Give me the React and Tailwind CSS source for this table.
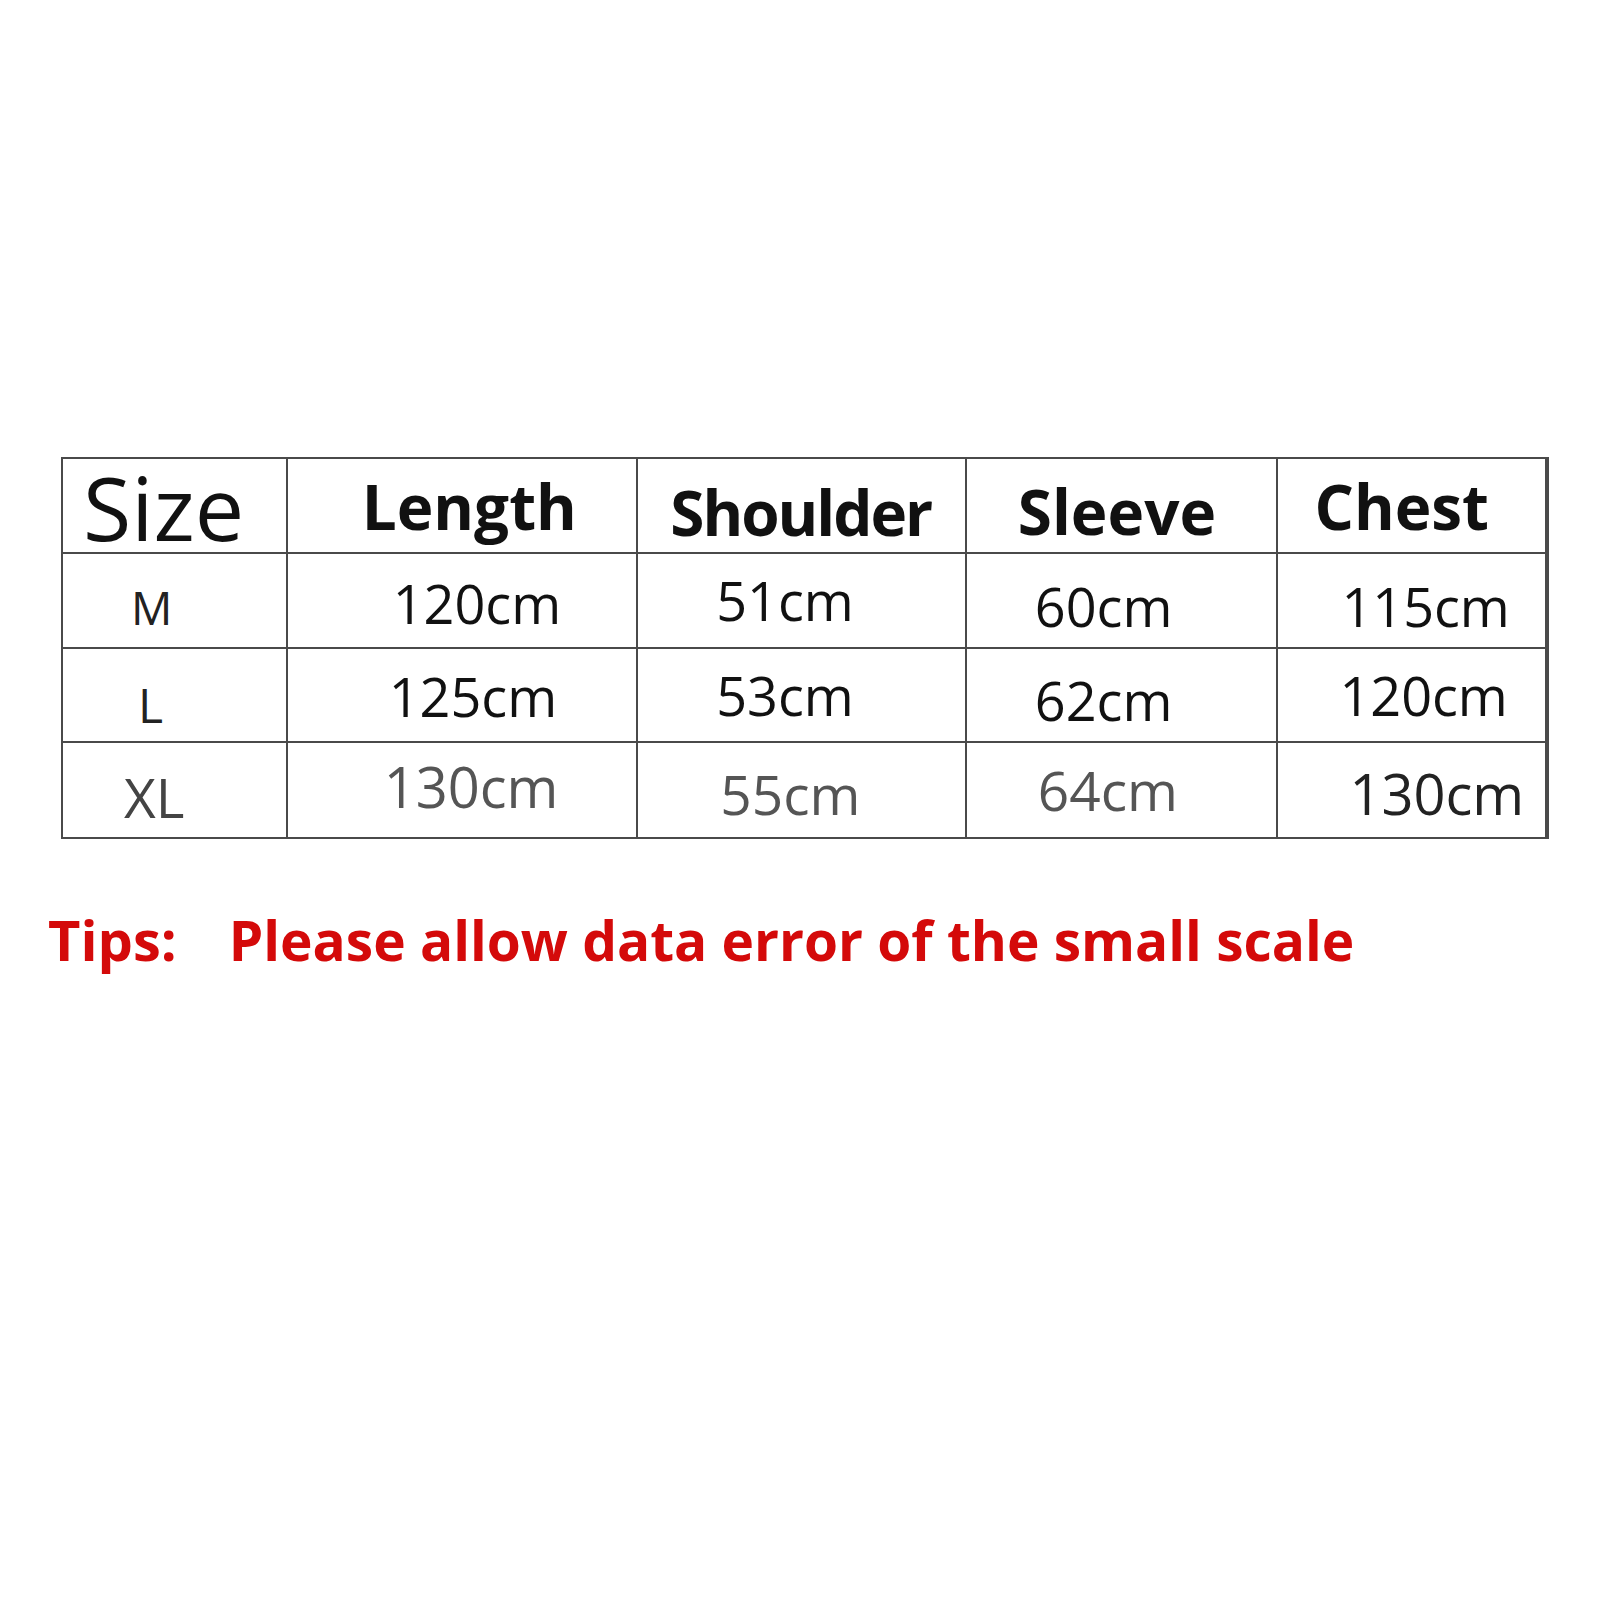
import React from "react";

const cols = [225, 351, 329, 312, 269];

function Cell({ children, pl, off = 0, cls = "", w, last }) {
  return (
    <div
      className={`flex items-center h-full border-r-2 border-[#4a4a4a] ${last ? "border-r-0" : ""}`}
      style={{ width: w }}
    >
      <div style={{ paddingLeft: pl, paddingTop: off > 0 ? off * 2 : 0, paddingBottom: off < 0 ? -off * 2 : 0 }} className={`whitespace-nowrap leading-none ${cls}`}>
        {children}
      </div>
    </div>
  );
}

const header = [
  { t: "Size", pl: 20, off: 1, cls: "text-[88px] font-normal text-[#111]" },
  { t: "Length", pl: 74, off: 0, cls: "text-[62px] font-bold text-[#111]" },
  { t: "Shoulder", pl: 32, off: 6, cls: "text-[62px] font-bold text-[#111] tracking-[-2px]" },
  { t: "Sleeve", pl: 51, off: 5, cls: "text-[62px] font-bold text-[#111]" },
  { t: "Chest", pl: 36, off: 0, cls: "text-[62px] font-bold text-[#111]" },
];

const rows = [
  {
    h: 95,
    cells: [
      { t: "M", pl: 68, off: 6, cls: "text-[46px] text-[#222]" },
      { t: "120cm", pl: 105, off: 2.5, cls: "text-[54px] text-[#111]" },
      { t: "51cm", pl: 78, off: -0.5, cls: "text-[54px] text-[#111]" },
      { t: "60cm", pl: 68, off: 5.5, cls: "text-[54px] text-[#111]" },
      { t: "115cm", pl: 63, off: 5.5, cls: "text-[54px] text-[#111]" },
    ],
  },
  {
    h: 94,
    cells: [
      { t: "L", pl: 75, off: 9.5, cls: "text-[48px] text-[#222]" },
      { t: "125cm", pl: 101, off: 0.5, cls: "text-[54px] text-[#111]" },
      { t: "53cm", pl: 78, off: -0.5, cls: "text-[54px] text-[#111]" },
      { t: "62cm", pl: 68, off: 4.5, cls: "text-[54px] text-[#111]" },
      { t: "120cm", pl: 61, off: -0.5, cls: "text-[54px] text-[#111]" },
    ],
  },
  {
    h: 94,
    cells: [
      { t: "XL", pl: 61, off: 6, cls: "text-[55px] text-[#444]" },
      { t: "130cm", pl: 96, off: -4, cls: "text-[56px] text-[#555]" },
      { t: "55cm", pl: 82, off: 3, cls: "text-[55px] text-[#555]" },
      { t: "64cm", pl: 71, off: -1, cls: "text-[55px] text-[#555]" },
      { t: "130cm", pl: 71, off: 3, cls: "text-[56px] text-[#222]" },
    ],
  },
];

export default function App() {
  return (
    <div className="w-[1600px] h-[1600px] bg-white" style={{ fontFamily: '"Open Sans", "Noto Sans", sans-serif' }}>
      <div className="pt-[457px] pl-[61px]">
        <div className="flex flex-col w-[1488px] border-2 border-[#4a4a4a]">
          <div className="flex h-[95px] border-b-2 border-[#4a4a4a]">
            {header.map((c, i) => (
              <Cell key={i} w={cols[i]} pl={c.pl} off={c.off} cls={c.cls} last={i === 4}>
                {c.t}
              </Cell>
            ))}
          </div>
          {rows.map((r, ri) => (
            <div
              key={ri}
              className={`flex ${ri < 2 ? "border-b-2 border-[#4a4a4a]" : ""}`}
              style={{ height: r.h }}
            >
              {r.cells.map((c, i) => (
                <Cell key={i} w={cols[i]} pl={c.pl} off={c.off} cls={c.cls} last={i === 4}>
                  {c.t}
                </Cell>
              ))}
            </div>
          ))}
        </div>
        <div className="mt-[72px] -ml-[13px] flex items-center text-[#d40a0a] font-bold text-[55px] leading-none whitespace-nowrap">
          <span className="text-[56px]">Tips:</span>
          <span className="ml-[52px]">Please allow data error of the small scale</span>
        </div>
      </div>
    </div>
  );
}
